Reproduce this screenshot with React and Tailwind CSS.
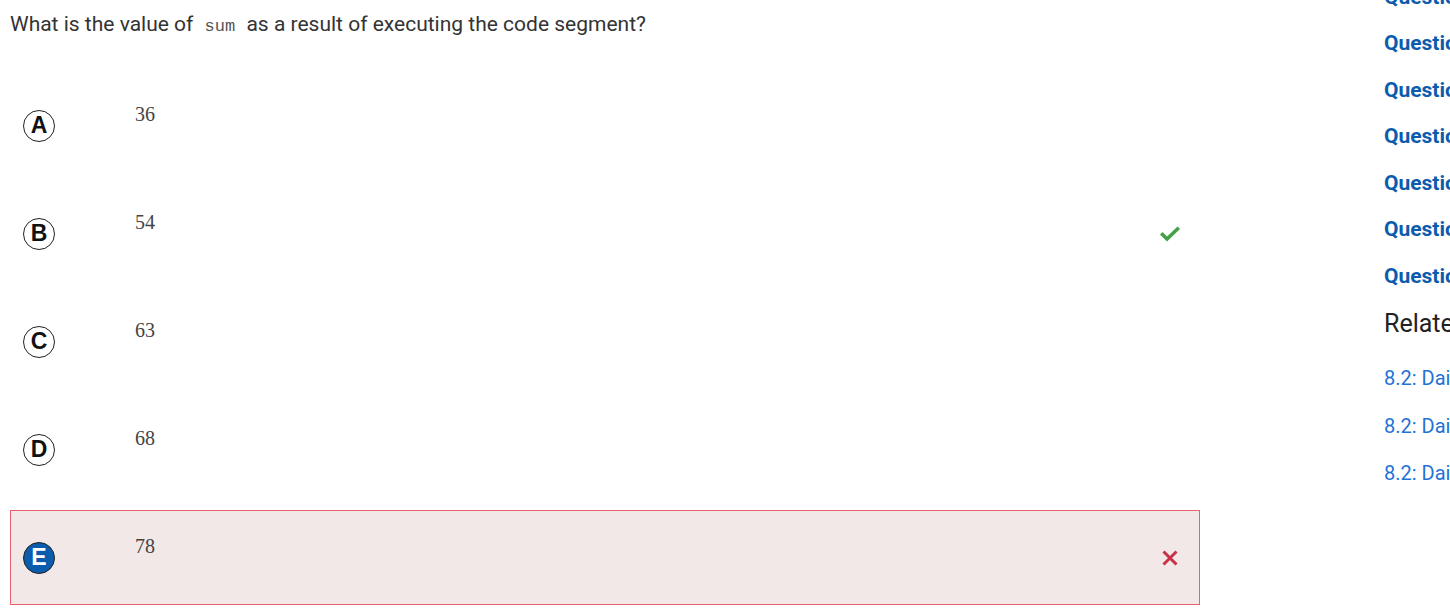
import React from 'react';

const options = [
  { letter: 'A', value: '36' },
  { letter: 'B', value: '54', correct: true },
  { letter: 'C', value: '63' },
  { letter: 'D', value: '68' },
  { letter: 'E', value: '78', chosen: true },
];

function Check() {
  return (
    <svg width="20" height="16" viewBox="0 0 20 16">
      <path d="M2.5 8.5l4.5 4.5L17.5 3" fill="none" stroke="#43a047" strokeWidth="3.6" strokeLinecap="square" />
    </svg>
  );
}

function Cross() {
  return (
    <svg width="18" height="18" viewBox="0 0 18 18">
      <path d="M2.5 2.5l13 13M15.5 2.5l-13 13" fill="none" stroke="#c8334a" strokeWidth="3" />
    </svg>
  );
}

export default function App() {
  return (
    <div className="w-[1450px] h-[609px] overflow-hidden bg-white flex" style={{ fontFamily: 'Roboto, "Liberation Sans", sans-serif' }}>
      {/* Question + answers */}
      <div className="w-[1190px] ml-[10px] shrink-0">
        <p className="mt-[10px] text-[21px] leading-[28px] text-[#333]">
          What is the value of{' '}
          <code className="px-[6px] text-[17px] text-[#555]" style={{ fontFamily: '"Liberation Mono", "DejaVu Sans Mono", monospace' }}>sum</code>
          {' '}as a result of executing the code segment?
        </p>

        <div className="mt-[37px] flex flex-col gap-[13px]">
          {options.map((o) => (
            <div
              key={o.letter}
              className={`h-[95px] flex items-start border ${o.chosen ? 'bg-[#f2e8e8] border-[#e8626e]' : 'border-transparent'}`}
            >
              <div className="h-full flex items-center pl-[12px]">
                <span
                  className={`w-[32px] h-[32px] rounded-full flex items-center justify-center text-[23px] font-black border-[1.5px] border-[#222] ${o.chosen ? 'bg-[#0b5cad] text-white' : 'bg-white text-[#111]'}`}
                  style={{ fontFamily: '"Liberation Sans", Arial, sans-serif' }}
                >
                  {o.letter}
                </span>
              </div>
              <div
                className="ml-[80px] pt-[22px] text-[20px] leading-[27px] text-[#444] flex-1"
                style={{ fontFamily: '"Liberation Serif", "Times New Roman", serif' }}
              >
                {o.value}
              </div>
              <div className="h-full w-[58px] flex items-center justify-center">
                {o.correct && <Check />}
                {o.chosen && <Cross />}
              </div>
            </div>
          ))}
        </div>
      </div>

      {/* Sidebar */}
      <div className="ml-[184px] mt-[-26px] shrink-0 whitespace-nowrap">
        <ul className="flex flex-col">
          {Array.from({ length: 7 }).map((_, i) => (
            <li key={i} className="h-[46.5px] flex items-center text-[21px] font-bold text-[#0b5cad]">
              Question {i + 1}
            </li>
          ))}
        </ul>
        <h3 className="mt-[10px] text-[25px] leading-[28px] text-[#222]">Related Posts</h3>
        <ul className="mt-[17px] flex flex-col">
          {Array.from({ length: 3 }).map((_, i) => (
            <li key={i} className="h-[47.5px] flex items-center text-[20px] text-[#1f73d6]">
              8.2: Daily Video {i + 1}
            </li>
          ))}
        </ul>
      </div>
    </div>
  );
}
